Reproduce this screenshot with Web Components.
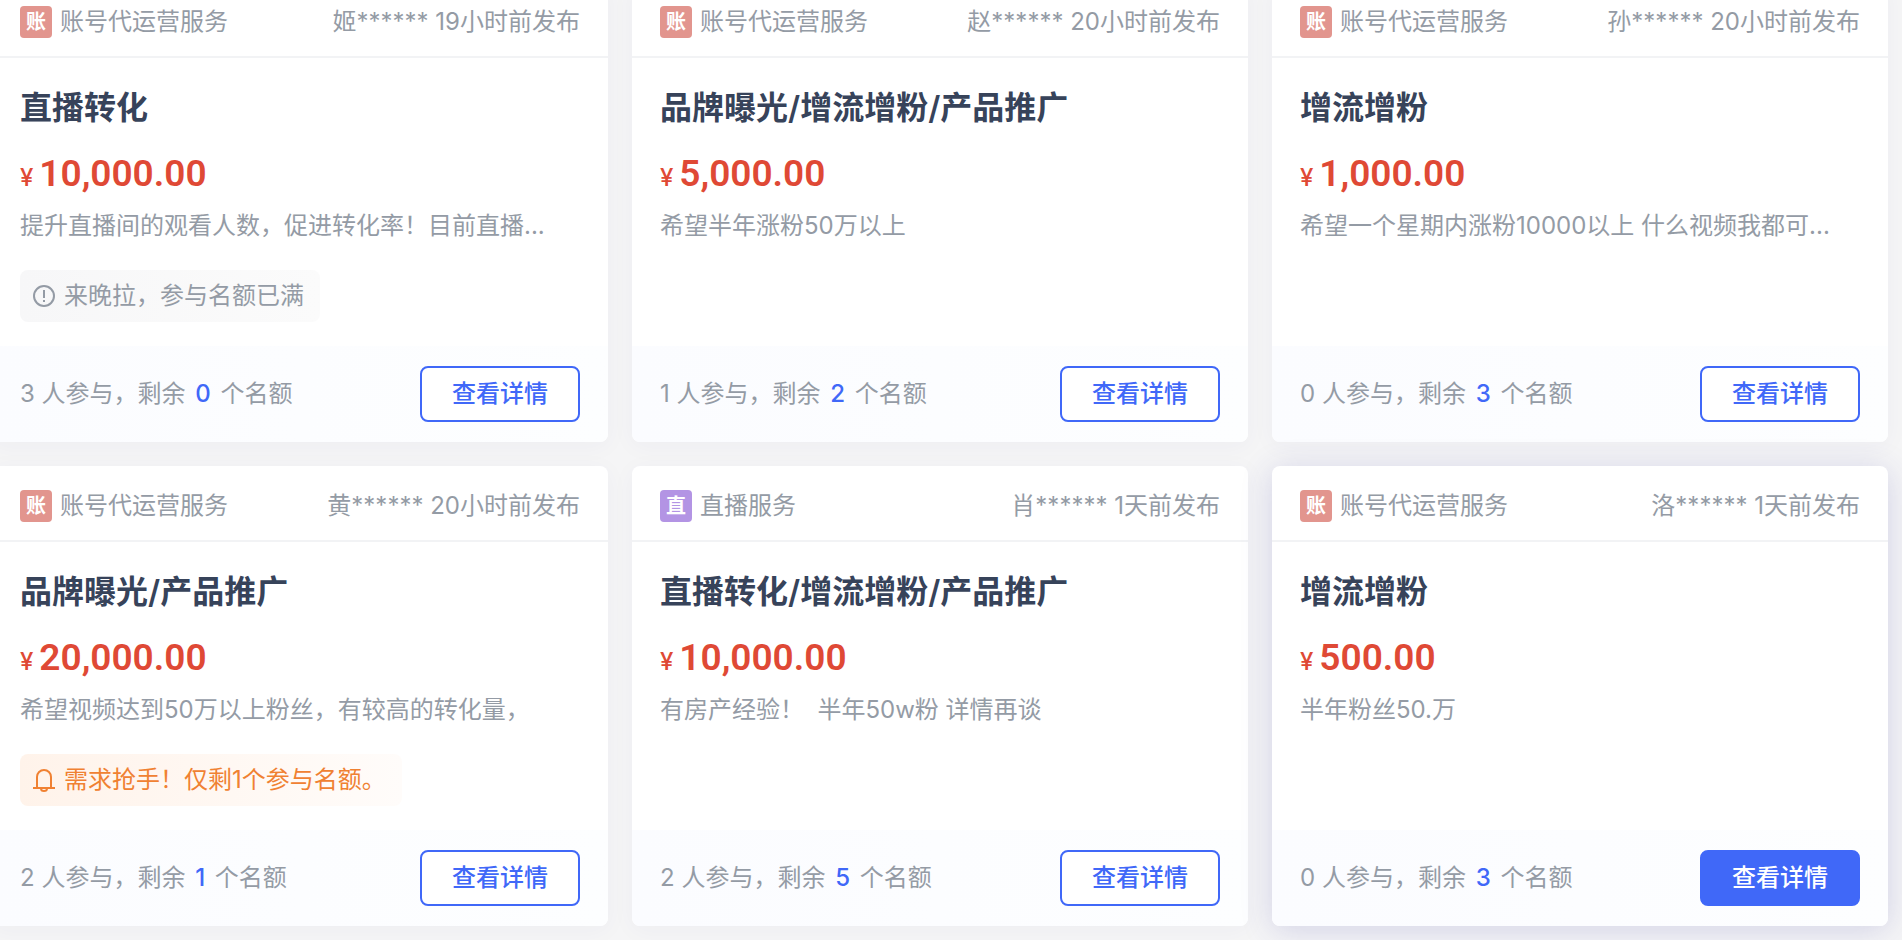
<!DOCTYPE html>
<html lang="zh-CN">
<head>
<meta charset="utf-8">
<title>需求大厅</title>
<style>
    html {
        height: 100%;
        overflow: hidden;
        background: #f5f5f6;
    }
    body {
        margin: 0;
        font-family: Inter, "Noto Sans CJK SC", sans-serif;
        font-size: 24px;
        line-height: 32px;
        color: #949ba5;
    }
</style>
</head>
<body>
<demand-list>
    <demand-card kind="账" service="账号代运营服务" author="姬******" time="19小时前发布" name="直播转化" price="10,000.00" joined="3" rest="0">
        提升直播间的观看人数，促进转化率！目前直播...
        <demand-tag slot="tag" type="full">来晚拉，参与名额已满</demand-tag>
    </demand-card>
    <demand-card kind="账" service="账号代运营服务" author="赵******" time="20小时前发布" name="品牌曝光/增流增粉/产品推广" price="5,000.00" joined="1" rest="2">希望半年涨粉50万以上</demand-card>
    <demand-card kind="账" service="账号代运营服务" author="孙******" time="20小时前发布" name="增流增粉" price="1,000.00" joined="0" rest="3">希望一个星期内涨粉10000以上 什么视频我都可...</demand-card>
    <demand-card kind="账" service="账号代运营服务" author="黄******" time="20小时前发布" name="品牌曝光/产品推广" price="20,000.00" joined="2" rest="1">
        希望视频达到50万以上粉丝，有较高的转化量，
        <demand-tag slot="tag" type="hot">需求抢手！仅剩1个参与名额。</demand-tag>
    </demand-card>
    <demand-card kind="直" service="直播服务" author="肖******" time="1天前发布" name="直播转化/增流增粉/产品推广" price="10,000.00" joined="2" rest="5">有房产经验！&nbsp; 半年50w粉 详情再谈</demand-card>
    <demand-card active kind="账" service="账号代运营服务" author="洛******" time="1天前发布" name="增流增粉" price="500.00" joined="0" rest="3">半年粉丝50.万</demand-card>
</demand-list>

<script>
const icons = {
    full: `<circle cx="12" cy="12" r="10"/><path d="M12 6v8"/><path d="M12 16v2"/>`,
    hot: `<path d="M5 20V9a7 7 0 0 1 14 0V20"/><path d="M1 20h22"/><path d="M9 20.500a3 2.500 0 0 0 6 0"/>`
};

class DemandList extends HTMLElement {
    connectedCallback() {
        this.attachShadow({ mode: "open" });
        // the list is scrolled: the first row and column run past the window edge
        this.shadowRoot.innerHTML = `
            <style>
                :host {
                    display: grid;
                    grid-template-columns: repeat(3, minmax(0, 1fr));
                    gap: 24px;
                    margin: -18px 14px 14px -8px;
                }
            </style>
            <slot></slot>
        `;
    }
}

class DemandTag extends HTMLElement {
    connectedCallback() {
        this.attachShadow({ mode: "open" });
        this.shadowRoot.innerHTML = `
            <style>
                :host {
                    display: flex;
                    align-items: center;
                    gap: 8px;
                    width: fit-content;
                    height: 52px;
                    padding: 0 16px 0 12px;
                    border-radius: 8px;
                    box-sizing: border-box;
                    white-space: nowrap;
                    background: linear-gradient(90deg, #f7f7f8, #fbfbfb);
                    color: #949ba5;
                }
                :host([type="hot"]) {
                    background: linear-gradient(90deg, #fff3ea, #fffcfa);
                    color: #f08132;
                }
                svg {
                    width: 24px;
                    height: 24px;
                    fill: none;
                    stroke: currentColor;
                    stroke-width: 2;
                }
            </style>
            <svg viewBox="0 0 24 24" aria-hidden="true">${icons[this.getAttribute("type")]}</svg>
            <span><slot></slot></span>
        `;
    }
}

class DemandCard extends HTMLElement {
    connectedCallback() {
        this.attachShadow({ mode: "open" });
        this.render();
    }

    render() {
        const get = (name) => this.getAttribute(name);
        this.shadowRoot.innerHTML = `
            <style>
                :host {
                    display: flex;
                    flex-direction: column;
                    min-height: 460px;
                    border-radius: 8px;
                    background: #fff;
                    box-shadow: 0 4px 24px rgba(60, 50, 120, 0.04);
                }
                :host([active]) {
                    box-shadow: 0 4px 32px rgba(50, 50, 160, 0.18);
                }
                header, footer {
                    display: flex;
                    align-items: center;
                    justify-content: space-between;
                    box-sizing: border-box;
                    padding: 0 28px;
                    white-space: nowrap;
                }
                header {
                    height: 76px;
                    padding-top: 6px;
                    border-bottom: 2px solid #f2f3f5;
                }
                .service {
                    display: flex;
                    align-items: center;
                    gap: 8px;
                }
                .kind {
                    width: 32px;
                    border-radius: 4px;
                    background: #e2958e;
                    color: #fff;
                    font-size: 20px;
                    font-weight: 700;
                    text-align: center;
                }
                .kind.live {
                    background: #b394e4;
                }
                .body {
                    flex: 1;
                    padding: 26px 28px 24px;
                }
                h3 {
                    margin: 0 0 18px;
                    font-size: 32px;
                    font-weight: 600;
                    line-height: 48px;
                    color: #37435a;
                }
                .price {
                    margin: 0 0 12px;
                    font-family: Roboto, sans-serif;
                    font-size: 37px;
                    font-weight: 600;
                    line-height: 48px;
                    color: #df4935;
                }
                .price small {
                    margin-right: 6px;
                    font-family: Inter, sans-serif;
                    font-size: 24px;
                    font-weight: 500;
                    line-height: 24px;
                }
                .desc {
                    margin: 0 0 28px;
                    white-space: nowrap;
                }
                footer {
                    height: 96px;
                    border-radius: 0 0 8px 8px;
                    background: linear-gradient(90deg, #fbfcff, #fdfeff);
                }
                b {
                    margin: 0 3px;
                    font-weight: 500;
                    color: #4068f8;
                }
                button {
                    width: 160px;
                    height: 56px;
                    padding: 0;
                    border: 2px solid #4068f8;
                    border-radius: 8px;
                    background: #fff;
                    color: #4068f8;
                    font: inherit;
                    font-weight: 500;
                }
                :host([active]) button {
                    background: #4068f8;
                    color: #fff;
                }
            </style>
            <header>
                <div class="service">
                    <span class="kind ${get("kind") === "直" ? "live" : ""}">${get("kind")}</span>
                    <span>${get("service")}</span>
                </div>
                <span>${get("author")} ${get("time")}</span>
            </header>
            <div class="body">
                <h3>${get("name")}</h3>
                <p class="price"><small>¥</small>${get("price")}</p>
                <p class="desc"><slot></slot></p>
                <slot name="tag"></slot>
            </div>
            <footer>
                <span>${get("joined")} 人参与，剩余 <b>${get("rest")}</b> 个名额</span>
                <button type="button">查看详情</button>
            </footer>
        `;
    }
}

customElements.define("demand-list", DemandList);
customElements.define("demand-tag", DemandTag);
customElements.define("demand-card", DemandCard);
</script>
</body>
</html>
